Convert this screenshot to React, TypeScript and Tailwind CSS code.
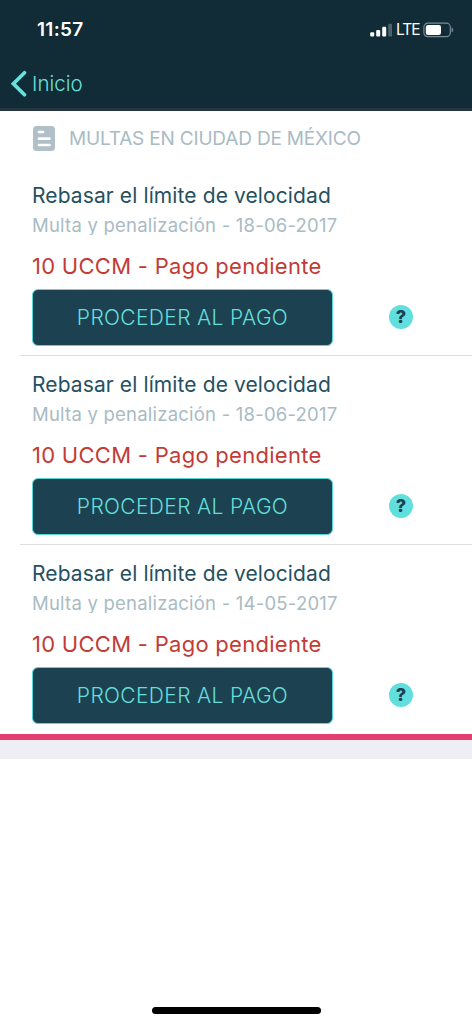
const fines = [
  { id: 1, date: '18-06-2017' },
  { id: 2, date: '18-06-2017' },
  { id: 3, date: '14-05-2017' },
];

function StatusIcons() {
  return (
    <div className="flex items-center text-white">
      <svg width="22" height="14" viewBox="0 0 22 14" fill="#fff">
        <rect x="0.2" y="9.2" width="4" height="4.3" rx="1.1" />
        <rect x="6.2" y="7" width="4" height="6.5" rx="1.1" />
        <rect x="12.2" y="3.8" width="4" height="9.7" rx="1.1" />
        <rect x="18.2" y="0.8" width="4" height="12.7" rx="1.1" opacity="0.25" />
      </svg>
      <span className="ml-[4px] w-[24px] text-[15.5px] leading-none tracking-[-1px]">LTE</span>
      <svg className="ml-[3px]" width="32" height="16" viewBox="0 0 32 16" fill="none">
        <rect x="0.9" y="1.2" width="26.4" height="13.4" rx="3.8" stroke="#788b92" strokeWidth="1.2" />
        <rect x="2.8" y="2.9" width="15.2" height="10" rx="2.2" fill="#fff" />
        <path d="M28.6 5.6c1.1.4 1.6 1.2 1.6 2.3s-.5 1.9-1.6 2.3z" fill="#788b92" />
      </svg>
    </div>
  );
}

function Fine({ date, last }: { date: string; last: boolean }) {
  return (
    <li className="h-[189px] pl-[32px] pt-[14px]">
      <h2 className="h-[30px] whitespace-nowrap text-[21px] leading-[31px] tracking-[0.11px] text-[#25505f]">
        Rebasar el límite de velocidad
      </h2>
      <p className="mt-[6px] h-[19px] overflow-hidden whitespace-nowrap text-[18.5px] leading-[19px] tracking-[0.22px] text-[#a9bbc3]">
        Multa y penalización - {date}
      </p>
      <p className="mt-[16px] h-[30px] whitespace-nowrap text-[22px] leading-[30px] tracking-[0.28px] text-[#c33b35]">
        10 UCCM - Pago pendiente
      </p>
      <div className="mt-[8px] flex items-center">
        <button className="flex h-[57px] w-[301px] items-center justify-center rounded-[6px] border border-[#5ad6d6] bg-[#1c4252] text-[21px] font-light tracking-[0.35px] text-[#64dedb]">
          PROCEDER AL PAGO
        </button>
        <span className="-mt-[2px] ml-[56px] flex size-[24px] items-center justify-center rounded-full bg-[#61dfdf] text-[18px] font-extrabold leading-none text-[#1c4252]">
          <span className="mt-px">?</span>
        </span>
      </div>
      {!last && <div className="-ml-[12px] mt-[9px] h-px bg-[#dededf]" />}
    </li>
  );
}

export default function App() {
  return (
    <div className="flex h-[1024px] w-[472px] flex-col overflow-hidden bg-white font-['Inter',sans-serif]">
      <header className="h-[111px] shrink-0 border-b-[3px] border-[#24353f] bg-[#112c36]">
        <div className="flex h-[59px] items-center justify-between pl-[37px] pr-[17px]">
          <span className="mt-[2px] text-[19px] font-semibold tracking-[0.3px] text-white">11:57</span>
          <StatusIcons />
        </div>
        <button className="flex h-[50px] items-center pl-[10px] text-[#6ae0dc]">
          <svg width="18" height="28" viewBox="0 0 18 28" fill="none" stroke="currentColor" strokeWidth="3.7" strokeLinecap="round">
            <path d="M14.5 2.8 3.4 13.8l11.1 11" />
          </svg>
          <span className="ml-[4px] text-[20.5px] font-light">Inicio</span>
        </button>
      </header>
      <main>
        <div className="flex h-[55px] items-center pl-[33px]">
          <svg width="22" height="25" viewBox="0 0 22 25" fill="none">
            <rect width="22" height="25" rx="3.5" fill="#b1c0c8" />
            <path d="M6 6h4M6 12.7h10.4M6 19h10.4" stroke="#fff" strokeWidth="2.7" strokeLinecap="round" />
          </svg>
          <h1 className="ml-[14px] mt-[2px] whitespace-nowrap text-[19px] tracking-[-0.18px] text-[#a9bbc3]">
            MULTAS EN CIUDAD DE MÉXICO
          </h1>
        </div>
        <ul>
          {fines.map((fine, i) => (
            <Fine key={fine.id} date={fine.date} last={i === fines.length - 1} />
          ))}
        </ul>
        <div className="mt-px h-[6px] bg-[#e43d70]" />
        <div className="h-[19px] bg-[#efeef4]" />
      </main>
      <div className="mb-[10px] ml-[152px] mt-auto h-[7px] w-[169px] rounded-full bg-black" />
    </div>
  );
}
